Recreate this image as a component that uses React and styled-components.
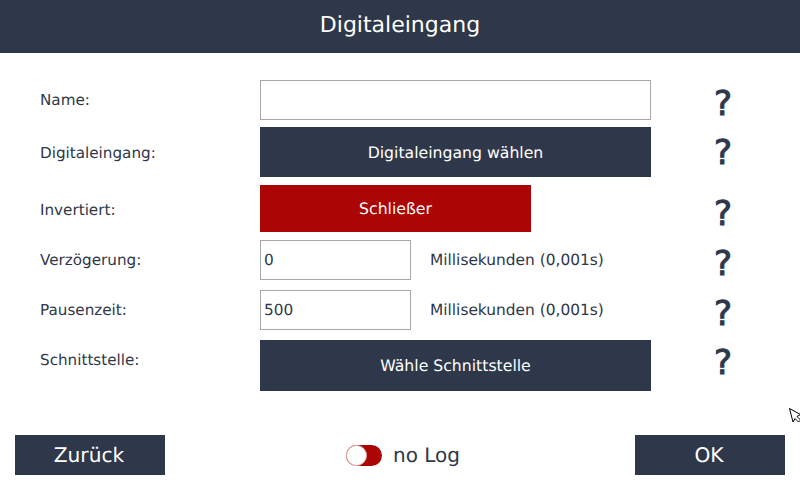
import React from "react"
import styled, { createGlobalStyle } from "styled-components"

const NAVY = "#2f384a"
const RED = "#ab0505"

const GlobalStyle = createGlobalStyle`
	html, body {
		margin: 0;
		padding: 0;
		background: #fff;
	}
	body {
		font-family: "DejaVu Sans", sans-serif;
		color: ${NAVY};
		text-rendering: geometricPrecision;
	}
	input, button {
		text-rendering: geometricPrecision;
	}
`

const rows = [
	{ label: "Name:", labelLine: 41, helpLine: 49, height: 40, gap: 27 },
	{ label: "Digitaleingang:", labelLine: 52, helpLine: 53, height: 50, gap: 7 },
	{ label: "Invertiert:", labelLine: 50, helpLine: 59, height: 47, gap: 8 },
	{ label: "Verzögerung:", labelLine: 41, helpLine: 49, height: 40, gap: 8 },
	{ label: "Pausenzeit:", labelLine: 41, helpLine: 49, height: 40, gap: 10 },
	{ label: "Schnittstelle:", labelLine: 41, helpLine: 47, height: 51, gap: 10 },
]

const App = () => {
	const control = (i) => {
		if (i === 0) return <TextField value="" $wide readOnly />
		if (i === 1) return <ActionButton>Digitaleingang wählen</ActionButton>
		if (i === 2) return <ActionButton $red>Schließer</ActionButton>
		if (i === 3 || i === 4) {
			return (
				<FieldWithUnit>
					<TextField value={i === 3 ? "0" : "500"} readOnly />
					<Unit>Millisekunden (0,001s)</Unit>
				</FieldWithUnit>
			)
		}
		return <ActionButton>Wähle Schnittstelle</ActionButton>
	}

	return (
		<Page>
			<GlobalStyle />
			<Header>Digitaleingang</Header>
			<Form>
				{rows.map((row, i) => (
					<Row key={row.label} $height={row.height} $gap={row.gap}>
						<Label $line={row.labelLine}>{row.label}</Label>
						{control(i)}
						<Help $line={row.helpLine}>?</Help>
					</Row>
				))}
			</Form>
			<Footer>
				<FooterButton>Zurück</FooterButton>
				<LogToggle>
					<Switch>
						<Knob />
					</Switch>
					<LogText>no Log</LogText>
				</LogToggle>
				<FooterButton>OK</FooterButton>
			</Footer>
			<Cursor width="14" height="17" viewBox="0 0 14 17">
				<path d="M1.5 1.5 L12.5 7.5 L9 9.5 L12.5 13 L10.5 15 L7 11.5 L5 15 Z" fill="#fff" stroke="#000" strokeWidth="1" />
			</Cursor>
		</Page>
	)
}

const Page = styled.div`
	position: relative;
	width: 800px;
	height: 480px;
	overflow: hidden;
	background: #fff;
	display: flex;
	flex-direction: column;
`

const Header = styled.header`
	height: 53px;
	flex: none;
	background-color: ${NAVY};
	color: #fff;
	font-size: 22px;
	line-height: 51px;
	text-align: center;
`

const Form = styled.main`
	flex: 1;
	padding-left: 40px;
`

const Row = styled.div`
	display: grid;
	grid-template-columns: 220px 391px 1fr;
	grid-template-rows: ${(p) => p.$height}px;
	align-items: stretch;
	margin-top: ${(p) => p.$gap}px;
`

const Label = styled.div`
	font-size: 15.2px;
	line-height: ${(p) => p.$line}px;
	color: ${NAVY};
`

const TextField = styled.input`
	box-sizing: border-box;
	width: ${(p) => (p.$wide ? "391px" : "151px")};
	height: 40px;
	margin: 0;
	padding: 0 3px;
	border: 1px solid #a5abaa;
	border-radius: 0;
	outline: none;
	background: #fff;
	font-family: "DejaVu Sans", sans-serif;
	font-size: 15.3px;
	color: ${NAVY};
`

const ActionButton = styled.button`
	box-sizing: border-box;
	width: ${(p) => (p.$red ? "271px" : "391px")};
	margin: 0;
	padding: 0;
	border: none;
	border-radius: 0;
	background-color: ${(p) => (p.$red ? RED : NAVY)};
	color: #fff;
	font-family: "DejaVu Sans", sans-serif;
	font-size: 15.7px;
`

const FieldWithUnit = styled.div`
	display: flex;
	align-items: center;
	gap: 19px;
`

const Unit = styled.span`
	font-size: 15.4px;
	color: ${NAVY};
`

const Help = styled.div`
	margin-left: 61px;
	width: 22px;
	text-align: center;
	font-size: 34px;
	font-weight: normal;
	-webkit-text-stroke: 1px ${NAVY};
	line-height: ${(p) => p.$line}px;
	color: ${NAVY};
`

const Footer = styled.footer`
	height: 40px;
	flex: none;
	margin-bottom: 5px;
	padding: 0 15px;
	display: flex;
	align-items: center;
	justify-content: space-between;
`

const FooterButton = styled.button`
	width: 150px;
	height: 40px;
	margin: 0;
	padding: 0 2px 0 0;
	border: none;
	border-radius: 0;
	background-color: ${NAVY};
	color: #fff;
	font-family: "DejaVu Sans", sans-serif;
	font-size: 20.2px;
`

const LogToggle = styled.div`
	display: flex;
	align-items: center;
	gap: 11px;
	margin-left: 6px;
`

const Switch = styled.div`
	position: relative;
	width: 36px;
	height: 21px;
	border-radius: 11px;
	background-color: ${RED};
`

const Knob = styled.div`
	position: absolute;
	left: 0;
	top: 0;
	box-sizing: border-box;
	width: 21px;
	height: 21px;
	border-radius: 50%;
	background: #fff;
	border: 1px solid #e8b4b4;
`

const LogText = styled.span`
	font-size: 20px;
	color: ${NAVY};
`

const Cursor = styled.svg`
	position: absolute;
	left: 788px;
	top: 407px;
`

export default App
